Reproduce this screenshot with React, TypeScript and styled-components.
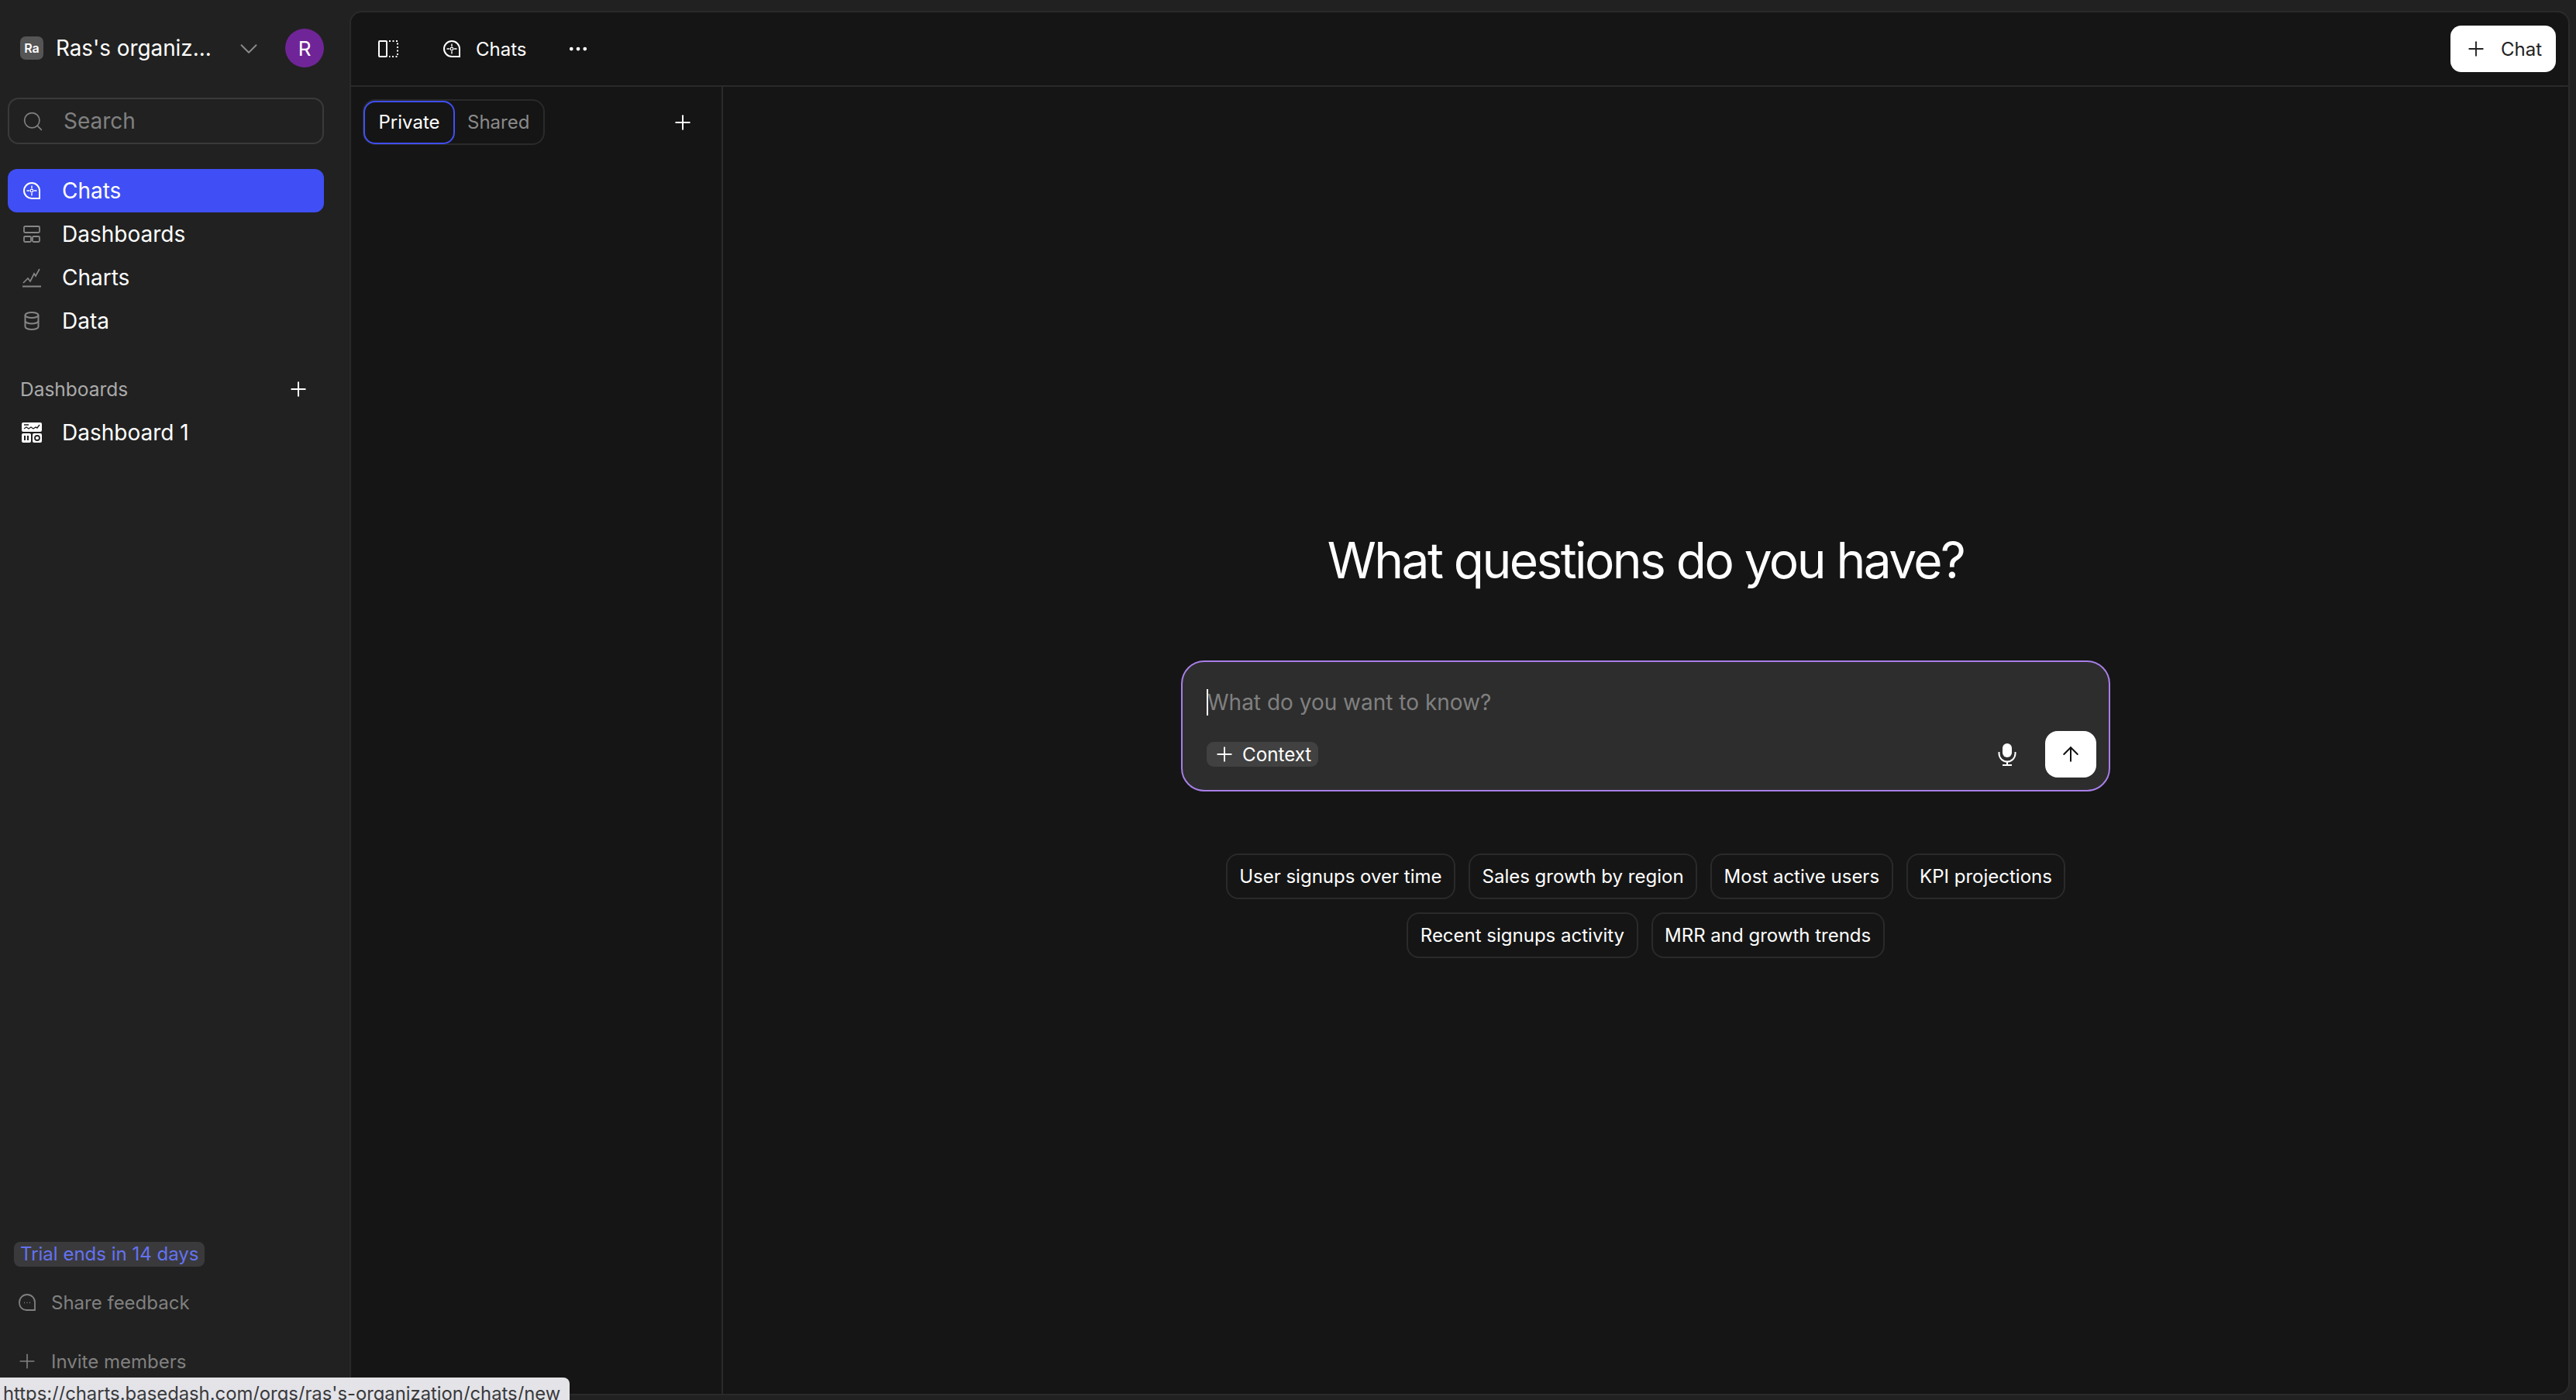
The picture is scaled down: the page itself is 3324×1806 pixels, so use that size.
import React from "react";
import styled, { createGlobalStyle } from "styled-components";
import { Plus, Search as SearchIcon, ChevronDown, ArrowUp, Ellipsis } from "lucide-react";

const Global = createGlobalStyle`
  html, body { margin: 0; padding: 0; height: 100%; background: #212121; overflow: hidden; }
  #root { height: 100%; }
  * { box-sizing: border-box; }
  body { font-family: Inter, "Liberation Sans", sans-serif; color: #fff; -webkit-font-smoothing: antialiased; }
`;

const Page = styled.div`
  position: relative;
  display: flex;
  width: 3324px;
  height: 1806px;
  background: #212121;
  overflow: hidden;
`;

const Sidebar = styled.aside`
  flex: 0 0 451px;
  display: flex;
  flex-direction: column;
  padding: 37px 33px 22px 10px;
`;

const OrgRow = styled.div`
  display: flex;
  align-items: center;
  height: 50px;
  padding-left: 16px;
  margin-bottom: 39px;
`;

const OrgBadge = styled.div`
  flex: 0 0 30px;
  height: 30px;
  border-radius: 7px;
  background: #555;
  display: flex;
  align-items: center;
  justify-content: center;
  font-size: 16px;
  font-weight: 600;
  margin-right: 16px;
`;

const OrgName = styled.div`
  flex: 1;
  font-size: 27.8px;
  font-weight: 400;
  white-space: nowrap;
`;

const OrgChevron = styled(ChevronDown)`
  color: #8a8a8a;
  margin-right: 28px;
  margin-top: 2px;
`;

const Avatar = styled.div`
  flex: 0 0 50px;
  height: 50px;
  border-radius: 50%;
  background: #6f2597;
  display: flex;
  align-items: center;
  justify-content: center;
  font-size: 26px;
`;

const SearchBox = styled.div`
  display: flex;
  align-items: center;
  height: 60px;
  border: 2px solid #3a3a3a;
  border-radius: 14px;
  padding-left: 16px;
  margin-bottom: 32px;
  color: #808080;
  font-size: 28px;
  gap: 25px;
`;

const NavItem = styled.div<{ $active?: boolean }>`
  display: flex;
  align-items: center;
  height: 56px;
  border-radius: 12px;
  padding-left: 18px;
  gap: 26px;
  font-size: 28px;
  color: #fff;
  background: ${(p) => (p.$active ? "#3f4ff5" : "transparent")};
`;

const NavGlyph = styled.span<{ $muted?: boolean }>`
  display: flex;
  flex: 0 0 26px;
  justify-content: center;
  color: ${(p) => (p.$muted ? "#868686" : "#fff")};
`;

const SectionHead = styled.div`
  display: flex;
  align-items: center;
  justify-content: space-between;
  height: 56px;
  margin-top: 32px;
  padding: 0 18px 0 16px;
  font-size: 24.5px;
  color: #aaa;
`;

const Spacer = styled.div`
  flex: 1;
`;

const Trial = styled.div`
  align-self: flex-start;
  margin: 0 0 18px 8px;
  height: 32px;
  padding: 0 8px;
  border-radius: 8px;
  background: #3a3a3c;
  color: #6472f2;
  font-size: 24px;
  line-height: 32px;
`;

const FootItem = styled.div`
  display: flex;
  align-items: center;
  height: 56px;
  padding-left: 14px;
  gap: 20px;
  color: #808080;
  font-size: 24px;
  & + & { margin-top: 20px; }
`;

const FootPlus = styled(Plus)`
  margin: 0 -4px;
`;

const Panel = styled.main`
  flex: 1;
  display: flex;
  flex-direction: column;
  margin: 14px 8px 6px 0;
  background: #151515;
  border: 2px solid #2a2a2a;
  border-radius: 16px;
  overflow: hidden;
`;

const TopBar = styled.header`
  flex: 0 0 96px;
  display: flex;
  align-items: center;
  padding: 0 16px 0 35px;
  border-bottom: 2px solid #2a2a2a;
`;

const Crumb = styled.div`
  display: flex;
  align-items: center;
  gap: 20px;
  margin-left: 58px;
  font-size: 24px;
`;

const More = styled(Ellipsis)`
  margin-left: 52px;
  color: #fff;
`;

const NewChat = styled.button`
  margin-left: auto;
  display: flex;
  align-items: center;
  gap: 17px;
  height: 60px;
  padding: 0 18px;
  border: 0;
  border-radius: 14px;
  background: #fff;
  color: #222;
  font: 400 24px Inter, sans-serif;
`;

const Body = styled.div`
  flex: 1;
  display: flex;
  min-height: 0;
`;

const ListPane = styled.section`
  flex: 0 0 480px;
  border-right: 2px solid #2a2a2a;
  padding: 16px 35px 0 15px;
`;

const ListHead = styled.div`
  display: flex;
  align-items: center;
  justify-content: space-between;
`;

const Tabs = styled.div`
  display: flex;
  align-items: center;
  height: 59px;
  border: 2px solid #2a2a2a;
  border-radius: 16px;
  padding-right: 18px;
`;

const Tab = styled.div<{ $active?: boolean }>`
  display: flex;
  align-items: center;
  justify-content: center;
  height: ${(p) => (p.$active ? "56px" : "auto")};
  margin-left: ${(p) => (p.$active ? "-1px" : "16px")};
  padding: ${(p) => (p.$active ? "0 17.5px" : "0")};
  border: ${(p) => (p.$active ? "2.5px solid #3f4ff5" : "0")};
  border-radius: 15px;
  background: ${(p) => (p.$active ? "#151515" : "transparent")};
  color: ${(p) => (p.$active ? "#fff" : "#8a8a8a")};
  font-size: 24px;
`;

const ChatPane = styled.section`
  flex: 1;
  display: flex;
  flex-direction: column;
  align-items: center;
  justify-content: center;
  padding-top: 13px;
`;

const Title = styled.h1`
  margin: 0 0 93px;
  font-size: 64px;
  line-height: 72px;
  font-weight: 400;
  letter-spacing: -2.55px;
`;

const Composer = styled.div`
  width: 1199px;
  height: 169px;
  display: flex;
  flex-direction: column;
  justify-content: space-between;
  border: 2.5px solid #a77fe8;
  border-radius: 30px;
  background: #2d2d2d;
  padding: 35px 16px 16px 31px;
  margin-bottom: 80px;
`;

const Prompt = styled.div`
  position: relative;
  display: flex;
  align-items: center;
  height: 34px;
  color: #808080;
  font-size: 28px;
`;

const Caret = styled.span`
  flex: 0 0 2px;
  height: 34px;
  background: #fff;
  margin-right: -1px;
`;

const ComposerFoot = styled.div`
  display: flex;
  align-items: center;
  height: 60px;
`;

const ContextChip = styled.div`
  display: flex;
  align-items: center;
  gap: 8px;
  height: 32px;
  padding: 0 9px 0 8px;
  border-radius: 9px;
  background: #414141;
  font-size: 24.2px;
`;

const MicWrap = styled.span`
  display: flex;
  margin-left: auto;
  margin-right: 37px;
`;

const Send = styled.button`
  width: 66px;
  height: 60px;
  display: flex;
  align-items: center;
  justify-content: center;
  border: 0;
  border-radius: 16px;
  background: #fff;
  color: #111;
`;

const Suggestions = styled.div`
  width: 1100px;
  display: flex;
  flex-wrap: wrap;
  justify-content: center;
  gap: 17px;
`;

const Chip = styled.div`
  height: 59px;
  display: flex;
  align-items: center;
  padding: 0 15.5px;
  border: 2px solid #2a2a2a;
  border-radius: 16px;
  font-size: 24px;
`;

const StatusBar = styled.div`
  position: absolute;
  left: 0;
  bottom: 0;
  width: 735px;
  height: 29px;
  padding: 6px 0 0 4px;
  background: #e3e3e8;
  border-top-right-radius: 8px;
  color: #3a3a3c;
  font-size: 23.8px;
  line-height: 30px;
  white-space: nowrap;
  overflow: hidden;
`;

const ChatGlyph = ({ size = 22 }: { size?: number }) => (
  <svg width={size} height={size} viewBox="0 0 22 22" fill="none" stroke="currentColor" strokeWidth="2">
    <path d="M11 1a10 10 0 1 0 0 20h10V11A10 10 0 0 0 11 1Z" />
    <path d="M11 4.500v4M11 13.500v4M4.500 11h4M13.500 11h4" strokeWidth="1.400" />
    <rect x="9.500" y="9.500" width="3" height="3" strokeWidth="1" />
  </svg>
);

const LayoutGlyph = () => (
  <svg width="22" height="22" viewBox="0 0 22 22" fill="none" stroke="currentColor" strokeWidth="1.800">
    <rect x="1" y="1" width="20" height="8" rx="1.500" />
    <rect x="1" y="14" width="9" height="7" rx="1.500" />
    <rect x="12" y="14" width="9" height="7" rx="1.500" />
  </svg>
);

const ChartGlyph = () => (
  <svg width="26" height="26" viewBox="0 0 26 26" fill="none" stroke="currentColor" strokeWidth="2">
    <path d="M1 24.500h24" />
    <path d="M2 20l6-6 3 4 5-10 2 3 5-9" strokeWidth="1.700" />
  </svg>
);

const DataGlyph = () => (
  <svg width="20" height="24" viewBox="0 0 20 24" fill="none" stroke="currentColor" strokeWidth="2">
    <ellipse cx="10" cy="4.500" rx="8.500" ry="3.500" />
    <path d="M1.500 4.500v15c0 2 3.800 3.500 8.500 3.500s8.500-1.500 8.500-3.500v-15" />
    <path d="M1.500 12c0 2 3.800 3.500 8.500 3.500s8.500-1.500 8.500-3.500" />
  </svg>
);

const BoardGlyph = () => (
  <svg width="26" height="26" viewBox="0 0 26 26">
    <rect x="0" y="0" width="26" height="12" rx="2" fill="#fff" />
    <rect x="0" y="14" width="12" height="12" rx="2" fill="#fff" />
    <rect x="14" y="14" width="12" height="12" rx="2" fill="#fff" />
    <path d="M3 8l3-2 3 2 3-2 3 2 3-2 2 1 3-4M3 3h6" fill="none" stroke="#212121" strokeWidth="1.400" />
    <path d="M4 17v6M8 17v6" stroke="#212121" strokeWidth="2" />
    <circle cx="20" cy="20" r="3" fill="none" stroke="#212121" strokeWidth="1.800" />
  </svg>
);

const FeedbackGlyph = () => (
  <svg width="22" height="22" viewBox="0 0 22 22" fill="none" stroke="currentColor" strokeWidth="1.800">
    <path d="M11 1a10 10 0 0 0-10 10v1a9 9 0 0 0 9 9h11V11A10 10 0 0 0 11 1Z" />
    <path d="M7 11.500h1M10.500 11.500h1M14 11.500h1" strokeWidth="1.400" />
  </svg>
);

const PanelGlyph = () => (
  <svg width="26" height="22" viewBox="0 0 26 22" fill="none" stroke="#fff" strokeWidth="2">
    <rect x="1" y="1" width="10" height="20" rx="1" />
    <path d="M14 1h11v20H14" strokeDasharray="2 2.500" />
  </svg>
);

const MicGlyph = () => (
  <svg width="24" height="30" viewBox="0 0 24 30" fill="none" stroke="#fff" strokeWidth="2">
    <rect x="6" y="1" width="12" height="18" rx="6" fill="#fff" stroke="none" />
    <path d="M1.500 12v2a10.500 10.500 0 0 0 21 0v-2M12 24.500V29M6 29h12" />
  </svg>
);

const nav = [
  { label: "Dashboards", icon: <LayoutGlyph /> },
  { label: "Charts", icon: <ChartGlyph /> },
  { label: "Data", icon: <DataGlyph /> },
];

const chips = [
  "User signups over time",
  "Sales growth by region",
  "Most active users",
  "KPI projections",
  "Recent signups activity",
  "MRR and growth trends",
];

export default function App() {
  return (
    <Page>
      <Global />
      <Sidebar>
        <OrgRow>
          <OrgBadge>Ra</OrgBadge>
          <OrgName>Ras's organiz...</OrgName>
          <OrgChevron size={38} strokeWidth={1.2} />
          <Avatar>R</Avatar>
        </OrgRow>
        <SearchBox>
          <SearchIcon size={29} strokeWidth={1.4} />
          <span>Search</span>
        </SearchBox>
        <NavItem $active>
          <NavGlyph><ChatGlyph /></NavGlyph>
          Chats
        </NavItem>
        {nav.map((n) => (
          <NavItem key={n.label}>
            <NavGlyph $muted>{n.icon}</NavGlyph>
            {n.label}
          </NavItem>
        ))}
        <SectionHead>
          Dashboards
          <Plus size={30} strokeWidth={1.6} color="#fff" />
        </SectionHead>
        <NavItem>
          <NavGlyph><BoardGlyph /></NavGlyph>
          Dashboard 1
        </NavItem>
        <Spacer />
        <Trial>Trial ends in 14 days</Trial>
        <FootItem><FeedbackGlyph />Share feedback</FootItem>
        <FootItem><FootPlus size={30} strokeWidth={1.3} />Invite members</FootItem>
      </Sidebar>
      <Panel>
        <TopBar>
          <PanelGlyph />
          <Crumb><ChatGlyph />Chats</Crumb>
          <More size={30} strokeWidth={1.8} />
          <NewChat><Plus size={30} strokeWidth={1.5} />Chat</NewChat>
        </TopBar>
        <Body>
          <ListPane>
            <ListHead>
              <Tabs>
                <Tab $active>Private</Tab>
                <Tab>Shared</Tab>
              </Tabs>
              <Plus size={30} strokeWidth={1.6} />
            </ListHead>
          </ListPane>
          <ChatPane>
            <Title>What questions do you have?</Title>
            <Composer>
              <Prompt><Caret />What do you want to know?</Prompt>
              <ComposerFoot>
                <ContextChip><Plus size={30} strokeWidth={1.5} />Context</ContextChip>
                <MicWrap><MicGlyph /></MicWrap>
                <Send><ArrowUp size={30} strokeWidth={1.6} /></Send>
              </ComposerFoot>
            </Composer>
            <Suggestions>
              {chips.map((c) => <Chip key={c}>{c}</Chip>)}
            </Suggestions>
          </ChatPane>
        </Body>
      </Panel>
      <StatusBar>https://charts.basedash.com/orgs/ras's-organization/chats/new</StatusBar>
    </Page>
  );
}
